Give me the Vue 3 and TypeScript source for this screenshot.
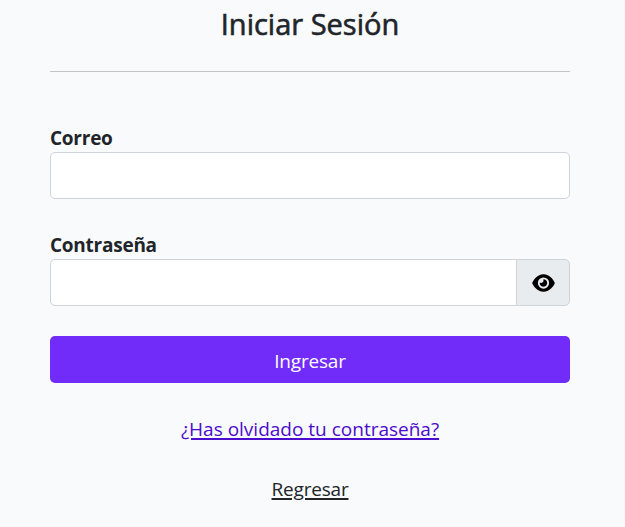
<script setup lang="ts">
import { ref } from 'vue'

const email = ref('')
const password = ref('')
const visible = ref(false)
</script>

<template>
  <main class="login">
    <h1 class="title">Iniciar Sesión</h1>
    <hr class="rule" />
    <form @submit.prevent>
      <label class="label" for="email">Correo</label>
      <input id="email" v-model="email" class="control" type="email" />
      <label class="label second" for="password">Contraseña</label>
      <div class="group">
        <input id="password" v-model="password" class="control" :type="visible ? 'text' : 'password'" />
        <button class="toggle" type="button" @click="visible = !visible">
          <svg viewBox="0 0 576 512" width="23" height="20">
            <path d="M288 32c-80.800 0-145.500 36.800-192.600 80.600C48.600 156 17.300 208 2.500 243.700c-3.300 7.900-3.300 16.700 0 24.600C17.300 304 48.600 356 95.400 399.400C142.500 443.200 207.200 480 288 480s145.500-36.800 192.600-80.600c46.800-43.500 78.100-95.400 93-131.100c3.300-7.900 3.300-16.700 0-24.600c-14.900-35.700-46.200-87.700-93-131.100C433.500 68.800 368.800 32 288 32zM144 256a144 144 0 1 1 288 0 144 144 0 1 1-288 0zm144-64c0 35.300-28.700 64-64 64c-7.100 0-13.900-1.200-20.300-3.300c-5.500-1.800-11.900 1.600-11.700 7.400c.3 6.900 1.300 13.800 3.200 20.700c13.700 51.200 66.400 81.600 117.600 67.900s81.600-66.400 67.900-117.600c-11.100-41.500-47.800-69.400-88.600-71.100c-5.800-.2-9.200 6.100-7.400 11.700c2.100 6.400 3.300 13.200 3.300 20.300z" />
          </svg>
        </button>
      </div>
      <button class="submit" type="submit">Ingresar</button>
    </form>
    <a class="link forgot" href="#">¿Has olvidado tu contraseña?</a>
    <a class="link back" href="#">Regresar</a>
  </main>
</template>

<style>
body { background: #f8fafc; }
</style>

<style scoped>
.login {
  box-sizing: border-box;
  width: 625px;
  height: 527px;
  padding: 6px 55px 0 50px;
  overflow: hidden;
  font-family: "Segoe UI", "Open Sans", "Noto Sans", sans-serif;
  font-size: 19px;
  line-height: 28px;
  color: #212529;
}
.title {
  margin: 0;
  font-size: 29px;
  font-weight: 500;
  line-height: 36px;
  text-align: center;
  -webkit-text-stroke: 0.6px #212529;
}
.rule { height: 1px; margin: 29px 0 52px; border: 0; background: #c1c3c5; }
.label { display: block; height: 28px; font-weight: 700; letter-spacing: -0.25px; }
.second { margin-top: 32px; }
.control {
  display: block;
  box-sizing: border-box;
  width: 100%;
  height: 47px;
  padding: 7px 14px;
  border: 1px solid #ced4da;
  border-radius: 5px;
  background: #fff;
  font: inherit;
  outline: 0;
}
.group { display: flex; }
.group .control { flex: 1; min-width: 0; border-radius: 5px 0 0 5px; }
.toggle {
  display: flex;
  align-items: center;
  justify-content: center;
  box-sizing: border-box;
  width: 54px;
  height: 47px;
  margin-left: -1px;
  padding: 0;
  border: 1px solid #ced4da;
  border-radius: 0 5px 5px 0;
  background: #e9ecef;
}
.submit {
  display: block;
  width: 100%;
  height: 47px;
  margin-top: 30px;
  padding: 2px 0 0;
  border: 0;
  border-radius: 5px;
  background: #712cf9;
  color: #fff;
  font: inherit;
  letter-spacing: -0.2px;
}
.link {
  display: block;
  text-align: center;
  text-decoration: underline;
  text-decoration-thickness: 2px;
  text-underline-offset: 2px;
}
.forgot { margin-top: 32px; color: #4c0bce; }
.back { margin-top: 32px; color: #212529; letter-spacing: -0.2px; }
</style>
